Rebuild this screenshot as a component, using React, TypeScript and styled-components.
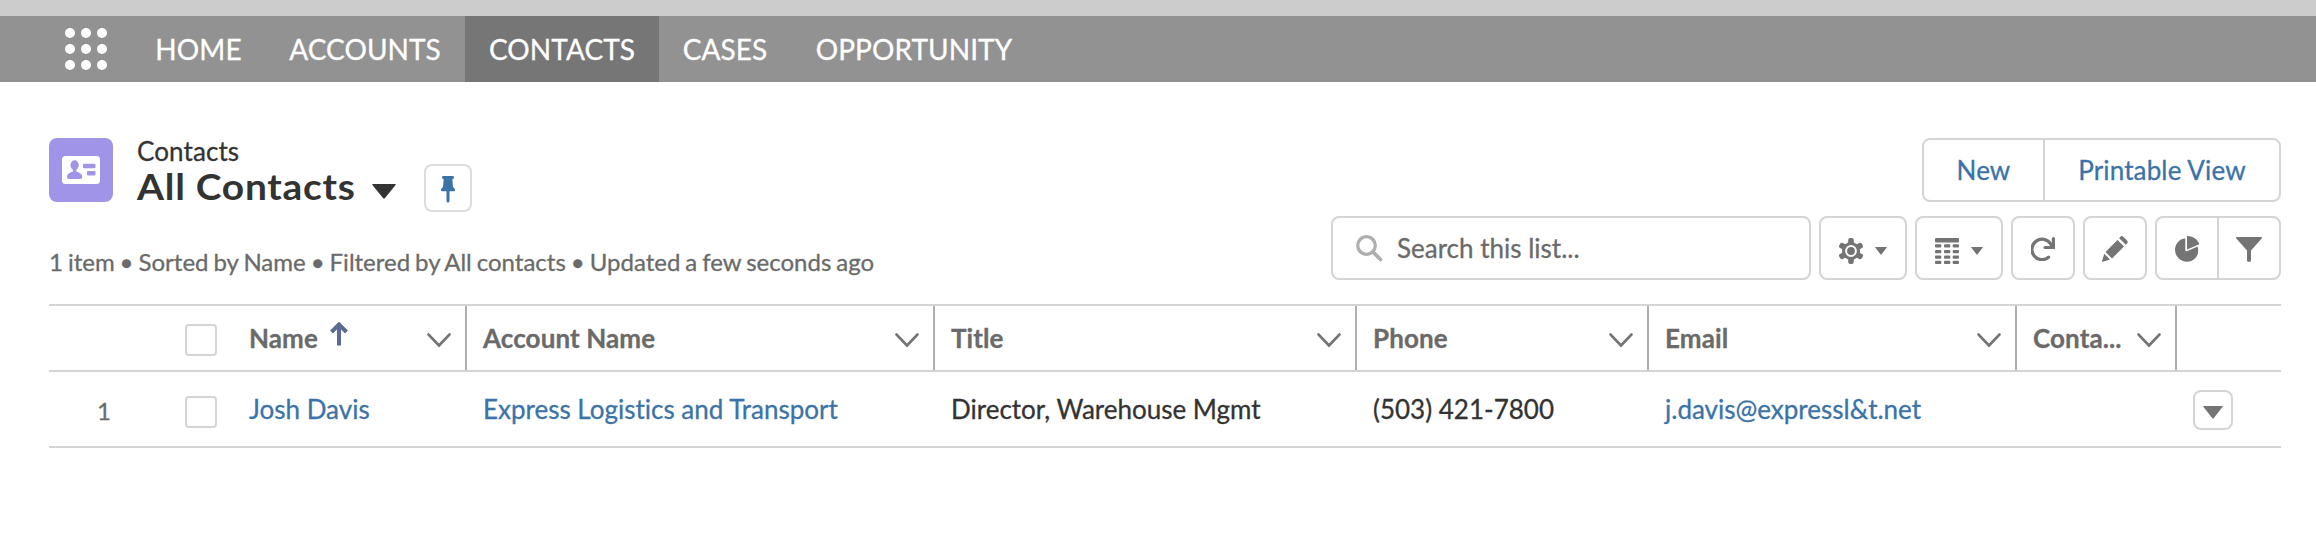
import React from 'react';
import styled, { createGlobalStyle } from 'styled-components';

const Global = createGlobalStyle`
  * { box-sizing: border-box; }
  body {
    margin: 0; background: #fff; font-family: Lato, "Liberation Sans", sans-serif; color: #333;
    font-variant-ligatures: none; -webkit-text-stroke: 0.3px currentColor;
  }
  a { text-decoration: none; }
`;

const BLUE = '#3b73a8';
const GRAY = '#747474';
const LINE = '#d4d4d4';

const Page = styled.div`height: 538px; background: #fff; overflow: hidden;`;
const TopStrip = styled.div`height: 16px; background: #ccc;`;
const NavBar = styled.nav`
  height: 66px; background: #929292; display: flex; align-items: stretch; padding-left: 65px;
`;
const Launcher = styled.div`
  width: 42px; height: 42px; margin: 12px 25px 0 0; display: grid;
  grid-template-columns: repeat(3, 10px); grid-auto-rows: 10px; gap: 6px;
`;
const Dot = styled.span`border-radius: 50%; background: #fff;`;
const NavItem = styled.a<{ $active?: boolean; $width: number }>`
  width: ${p => p.$width}px; display: flex; align-items: center; justify-content: center;
  color: #fff; font-size: 28px; white-space: nowrap; letter-spacing: 0.08px;
  background: ${p => (p.$active ? '#767676' : 'transparent')};
`;

const Header = styled.header`display: flex; justify-content: space-between; padding: 56px 35px 0 49px; height: 222px;`;
const HeaderLeft = styled.div`display: flex; flex-direction: column;`;
const TitleRow = styled.div`display: flex; align-items: flex-start; height: 109px;`;
const ObjectIcon = styled.div`
  width: 64px; height: 64px; border-radius: 8px; background: #9f94e8; margin-right: 24px;
  display: flex; align-items: center; justify-content: center;
`;
const TitleBlock = styled.div`display: flex; flex-direction: column;`;
const ObjectName = styled.div`font-size: 26px; line-height: 26px; letter-spacing: 0.1px;`;
const ViewName = styled.div`
  display: flex; align-items: center; font-size: 36px; line-height: 44px; font-weight: 700;
  width: 287px; white-space: nowrap; -webkit-text-stroke: 0;
`;
const ViewLabel = styled.span`
  letter-spacing: 0.7px; width: 235px; transform: scaleX(1.08); transform-origin: left center;
`;
const PinButton = styled.button`
  width: 48px; height: 48px; margin-top: 26px; padding: 2px 0 0; background: #fff; border: 2px solid #dcdcdc;
  border-radius: 8px; display: flex; align-items: center; justify-content: center;
`;
const Summary = styled.div`
  font-size: 24px; line-height: 30px; word-spacing: -1.15px; color: #6a6a6a; white-space: nowrap;
`;

const HeaderRight = styled.div`display: flex; flex-direction: column; align-items: flex-end; gap: 14px;`;
const ButtonGroup = styled.div`
  display: flex; height: 64px; border: 2px solid ${LINE}; border-radius: 8px; background: #fff;
`;
const GroupButton = styled.button<{ $width: number; $drop?: number }>`
  width: ${p => p.$width}px; padding: ${p => p.$drop ?? 0}px 0 0; border: 0; background: none;
  font: 26px Lato, sans-serif; letter-spacing: 0.14px; color: ${BLUE};
  display: flex; align-items: center; justify-content: center; gap: 12px;
  & + & { border-left: 2px solid ${LINE}; }
`;
const Tools = styled.div`display: flex; gap: 8px;`;
const SearchBox = styled.label`
  width: 480px; height: 64px; border: 2px solid ${LINE}; border-radius: 8px; display: flex;
  align-items: center; padding-left: 23px; gap: 14px; font-size: 26px; color: #6a6a6a;
`;

const Table = styled.div`margin: 0 35px 0 49px; border-top: 2px solid ${LINE};`;
const Row = styled.div<{ $height: number }>`
  display: grid; grid-template-columns: 200px 218px 468px 422px 292px 368px 160px 104px;
  height: ${p => p.$height}px; border-bottom: 2px solid ${LINE};
`;
const HeadCell = styled.div<{ $first?: boolean }>`
  display: flex; align-items: center; justify-content: space-between;
  padding: 0 14px 0 ${p => (p.$first ? 0 : 16)}px;
  border-right: 2px solid #afafaf; font-size: 26px; font-weight: 700; color: #6a6a6a; white-space: nowrap;
  & > svg { margin-top: 4px; }
`;
const HeadLabel = styled.span`display: flex; align-items: center; gap: 12px; letter-spacing: 0.1px;`;
const SelectCell = styled.div`
  display: flex; align-items: center; justify-content: space-between; padding: 0 32px 0 48px;
  font-size: 24px; color: #6a6a6a;
`;
const RowNumber = styled.span`width: 14px; margin-top: 2px;`;
const Checkbox = styled.span<{ $drop: number }>`
  width: 32px; height: 32px; margin-top: ${p => p.$drop}px; border: 2px solid ${LINE}; border-radius: 4px; background: #fff;
`;
const Cell = styled.div<{ $link?: boolean; $first?: boolean }>`
  padding-left: ${p => (p.$first ? 0 : 16)}px; font-size: 26px; line-height: 74px; white-space: nowrap;
  color: ${p => (p.$link ? BLUE : '#333')};
`;
const MenuButton = styled.button`
  width: 40px; height: 40px; margin: 18px 0 0 16px; padding: 5px 0 0; border: 2px solid ${LINE}; border-radius: 8px;
  background: #fff; display: flex; align-items: center; justify-content: center;
`;
const ViewCaret = styled.span`display: flex; margin-top: 11px;`;
const SortMark = styled.svg`margin-top: -9px;`;

const Caret = ({ w = 12, h = 8, color = GRAY }: { w?: number; h?: number; color?: string }) => (
  <svg width={w} height={h} viewBox="0 0 12 8" preserveAspectRatio="none" fill={color}>
    <path d="M.5 0h11q.6 0 .3.5L6.4 7.6q-.4.5-.8 0L.2.5Q-.1 0 .5 0z" />
  </svg>
);

const Chevron = () => (
  <svg width="24" height="15" viewBox="0 0 24 15" fill="none" stroke={GRAY} strokeWidth="2.8" strokeLinecap="round">
    <path d="M1.6 1.6L12 12.4 22.4 1.6" />
  </svg>
);

const ContactCard = () => (
  <svg width="38" height="28" viewBox="0 0 38 28">
    <rect width="38" height="28" rx="3.5" fill="#fff" />
    <g fill="#9f94e8">
      <ellipse cx="12.6" cy="9.2" rx="4.1" ry="5" />
      <path d="M10.900 12.500h3.400v3.100c3.200 1 5.900 2.600 5.900 5.400 0 1.300-.8 2-2 2H7c-1.200 0-2-.7-2-2 0-2.800 2.700-4.400 5.900-5.400z" />
      <rect x="21" y="7.800" width="12.500" height="4.500" rx="1" />
      <rect x="25" y="15" width="8.500" height="4.500" rx="1" />
    </g>
  </svg>
);

const Pin = () => (
  <svg width="14" height="27" viewBox="0 0 14 27" fill={BLUE}>
    <path d="M2 0h10q.8 0 .8.8v1.400q0 .8-.8.8h-.7l.7 8c1.300.8 2 1.900 2 3.400q0 .8-.8.8H8.500v9.800q-.2 1.500-1.500 1.500t-1.500-1.500v-9.800H.8Q0 15.200 0 14.400c0-1.500.7-2.600 2-3.400l.7-8H2q-.8 0-.8-.8V.8Q1.200 0 2 0z" />
  </svg>
);

const SearchIcon = () => (
  <svg width="27" height="27" viewBox="0 0 27 27" fill="none" stroke="#afafaf">
    <circle cx="10.500" cy="10.500" r="8.800" strokeWidth="3.300" />
    <path d="M17 17l7.500 7.500" strokeWidth="3.800" strokeLinecap="round" />
  </svg>
);

const Gear = () => (
  <svg width="24" height="26" viewBox="-12 -13 24 26">
    <g fill={GRAY}>
      {[0, 60, 120].map(a => (
        <rect key={a} x="-2.800" y="-13" width="5.600" height="26" rx="2" transform={`rotate(${a})`} />
      ))}
      <circle r="9" />
    </g>
    <circle r="4.900" fill={GRAY} stroke="#fff" strokeWidth="2" />
  </svg>
);

const TableIcon = () => (
  <svg width="24" height="26" viewBox="0 0 24 26" fill={GRAY}>
    <rect width="24" height="4.500" rx="1" />
    {[6.2, 12, 17.5, 22.8].map(y =>
      [0, 9, 17.7].map(x => <rect key={`${x}-${y}`} x={x} y={y} width="6.300" height="3.200" rx="1" />),
    )}
  </svg>
);

const Refresh = () => (
  <svg width="24" height="24" viewBox="0 0 24 24" fill="none" stroke={GRAY} strokeWidth="3.200" strokeLinecap="round">
    <path d="M17.600 20.300A10.200 10.200 0 1 1 19.600 6.800L21 9" />
    <path d="M14 10.500h8.400V1.600" />
  </svg>
);

const Pencil = () => (
  <svg width="26" height="26" viewBox="0 0 26 26" fill={GRAY}>
    <path d="M18.300.8q1.500-1.500 3 0l3.700 3.700q1.500 1.500 0 3L23.800 8.800 17.200 2.200z" />
    <path d="M15.500 4l6.500 6.500L10 22.500 3.500 16z" />
    <path d="M2.300 17.800L8 23.500.900 25.800q-1.200.2-.8-1z" />
  </svg>
);

const Pie = () => (
  <svg width="24" height="26" viewBox="0 0 24 26" fill={GRAY}>
    <path d="M10.300 2.800v11.400q0 1.500 1.500 1l10.800-4.600c2.500 8-2.900 15.100-10.600 15.100A12 12 0 0 1 0 14C0 8.300 4 3.300 9.300 2.500q1-.2 1 .3z" />
    <path d="M12.200 0C17.500 0 22.300 2.900 24 7.600q.2.600-.4.900L12.800 13.300q-.8.300-.8-.5V.2z" />
  </svg>
);

const Funnel = () => (
  <svg width="26" height="25" viewBox="0 0 26 25" fill={GRAY}>
    <path d="M.8 0h24.400q1.200.3.500 1.400L15 13.600v10q0 1.100-1 1.100h-2q-1 0-1-1.100v-10L.3 1.400Q-.4.300.8 0z" />
  </svg>
);

const SortArrow = () => (
  <SortMark width="18" height="24" viewBox="0 0 18 24" fill="none" stroke="#5a6a92" strokeWidth="4">
    <path d="M9 23.500V3M1.500 10L9 2.500l7.500 7.500" />
  </SortMark>
);

const COLUMNS = ['Name', 'Account Name', 'Title', 'Phone', 'Email', 'Conta...'];

export default function App() {
  return (
    <Page>
      <Global />
      <TopStrip />
      <NavBar>
        <Launcher>{Array.from({ length: 9 }, (_, i) => <Dot key={i} />)}</Launcher>
        <NavItem $width={133}>HOME</NavItem>
        <NavItem $width={200}>ACCOUNTS</NavItem>
        <NavItem $width={194} $active>CONTACTS</NavItem>
        <NavItem $width={132}>CASES</NavItem>
        <NavItem $width={246}>OPPORTUNITY</NavItem>
      </NavBar>
      <Header>
        <HeaderLeft>
          <TitleRow>
            <ObjectIcon><ContactCard /></ObjectIcon>
            <TitleBlock>
              <ObjectName>Contacts</ObjectName>
              <ViewName>
                <ViewLabel>All Contacts</ViewLabel>
                <ViewCaret><Caret w={24} h={15} color="#333" /></ViewCaret>
              </ViewName>
            </TitleBlock>
            <PinButton><Pin /></PinButton>
          </TitleRow>
          <Summary>1 item • Sorted by Name • Filtered by All contacts • Updated a few seconds ago</Summary>
        </HeaderLeft>
        <HeaderRight>
          <ButtonGroup>
            <GroupButton $width={119}>New</GroupButton>
            <GroupButton $width={236}>Printable View</GroupButton>
          </ButtonGroup>
          <Tools>
            <SearchBox><SearchIcon />Search this list...</SearchBox>
            <ButtonGroup><GroupButton $width={84} $drop={6}><Gear /><Caret /></GroupButton></ButtonGroup>
            <ButtonGroup><GroupButton $width={84} $drop={6}><TableIcon /><Caret /></GroupButton></ButtonGroup>
            <ButtonGroup><GroupButton $width={60} $drop={2}><Refresh /></GroupButton></ButtonGroup>
            <ButtonGroup><GroupButton $width={60} $drop={2}><Pencil /></GroupButton></ButtonGroup>
            <ButtonGroup>
              <GroupButton $width={60} $drop={2}><Pie /></GroupButton>
              <GroupButton $width={62} $drop={2}><Funnel /></GroupButton>
            </ButtonGroup>
          </Tools>
        </HeaderRight>
      </Header>
      <Table>
        <Row $height={66}>
          <SelectCell><RowNumber /><Checkbox $drop={4} /></SelectCell>
          {COLUMNS.map((label, i) => (
            <HeadCell key={label} $first={i === 0}>
              <HeadLabel>{label}{i === 0 && <SortArrow />}</HeadLabel>
              <Chevron />
            </HeadCell>
          ))}
        </Row>
        <Row $height={76}>
          <SelectCell><RowNumber>1</RowNumber><Checkbox $drop={6} /></SelectCell>
          <Cell $link $first>Josh Davis</Cell>
          <Cell $link>Express Logistics and Transport</Cell>
          <Cell>Director, Warehouse Mgmt</Cell>
          <Cell>(503) 421-7800</Cell>
          <Cell $link>j.davis@expressl&amp;t.net</Cell>
          <Cell />
          <MenuButton><Caret w={20} h={13} /></MenuButton>
        </Row>
      </Table>
    </Page>
  );
}
